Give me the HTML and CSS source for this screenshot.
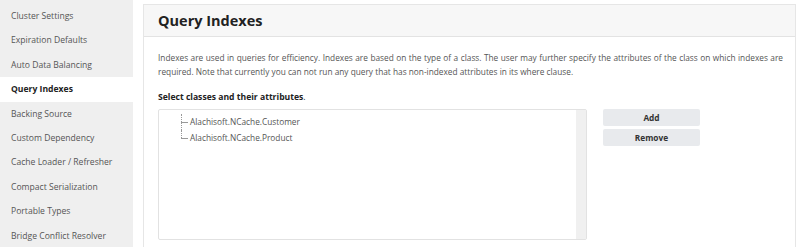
FILE: index.html
```html
<!DOCTYPE html>
<html>
<head>
<meta charset="utf-8">
<link rel="stylesheet" href="styles.css">
</head>
<body>
<div class="layout">
  <nav class="sidebar">
    <div class="nav-item">Cluster Settings</div>
    <div class="nav-item">Expiration Defaults</div>
    <div class="nav-item">Auto Data Balancing</div>
    <div class="nav-item active">Query Indexes</div>
    <div class="nav-item">Backing Source</div>
    <div class="nav-item">Custom Dependency</div>
    <div class="nav-item">Cache Loader / Refresher</div>
    <div class="nav-item">Compact Serialization</div>
    <div class="nav-item">Portable Types</div>
    <div class="nav-item">Bridge Conflict Resolver</div>
  </nav>
  <main class="panel">
    <div class="panel-head"><h1>Query Indexes</h1></div>
    <div class="panel-body">
      <p class="desc">Indexes are used in queries for efficiency. Indexes are based on the type of a class. The user may further specify the attributes of the class on which indexes are required. Note that currently you can not run any query that has non-indexed attributes in its where clause.</p>
      <div class="label"><b>Select classes and their attributes</b>.</div>
      <div class="row">
        <div class="listbox">
          <div class="tree">
            <div class="node">Alachisoft.NCache.Customer</div>
            <div class="node last">Alachisoft.NCache.Product</div>
          </div>
          <div class="scroll"></div>
        </div>
        <div class="buttons">
          <button class="btn">Add</button>
          <button class="btn">Remove</button>
        </div>
      </div>
    </div>
  </main>
</div>
</body>
</html>
```
FILE: styles.css
```css
* { box-sizing: border-box; }
html, body { margin: 0; padding: 0; background: #fff; }
body { font-family: "Open Sans", "Noto Sans", sans-serif; color: #333; width: 800px; height: 247px; overflow: hidden; }
.layout { display: flex; align-items: flex-start; }
.sidebar { width: 133px; flex: none; background: #efefef; padding-top: 4px; height: 247px; }
.nav-item { height: 24.4px; line-height: 24.4px; padding-left: 11px; font-size: 8.6px; color: #555; white-space: nowrap; }
.nav-item.active { background: #fff; font-weight: 700; color: #222; }
.panel { margin: 4px 0 0 10px; width: 653px; border: 1px solid #e6e6e6; border-bottom: none; height: 243px; }
.panel-head { background: #f7f7f7; border-bottom: 1px solid #e3e3e3; height: 32px; display: flex; align-items: center; padding-left: 14px; }
.panel-head h1 { margin: 0; font-size: 14.5px; font-weight: 700; color: #222; letter-spacing: 0; }
.panel-body { padding: 14px 12px 0 14px; }
.desc { margin: 0; font-size: 8.3px; line-height: 14px; text-align: justify; color: #555; }
.label { margin-top: 12px; font-size: 8.6px; color: #222; }
.row { display: flex; gap: 16px; margin-top: 6px; }
.listbox { width: 429px; height: 131px; border: 1px solid #e2e2e2; border-radius: 2px; display: flex; }
.tree { flex: 1; padding: 4px 0 0 22px; }
.node { position: relative; font-size: 8.3px; color: #555; height: 16px; line-height: 16px; padding-left: 9px; }
.node::before { content: ""; position: absolute; left: 0; top: 8px; width: 7px; border-top: 1px solid #999; }
.node::after { content: ""; position: absolute; left: 0; top: 0; height: 16px; border-left: 1px dotted #999; }
.node.last::after { height: 8px; }
.scroll { width: 10px; background: #f0f0f0; }
.buttons { display: flex; flex-direction: column; gap: 3px; }
.btn { width: 97px; height: 17px; border: none; border-radius: 2px; background: #e8eaed; font-family: inherit; font-size: 8.3px; font-weight: 700; color: #333; padding: 0; cursor: pointer; }
```
